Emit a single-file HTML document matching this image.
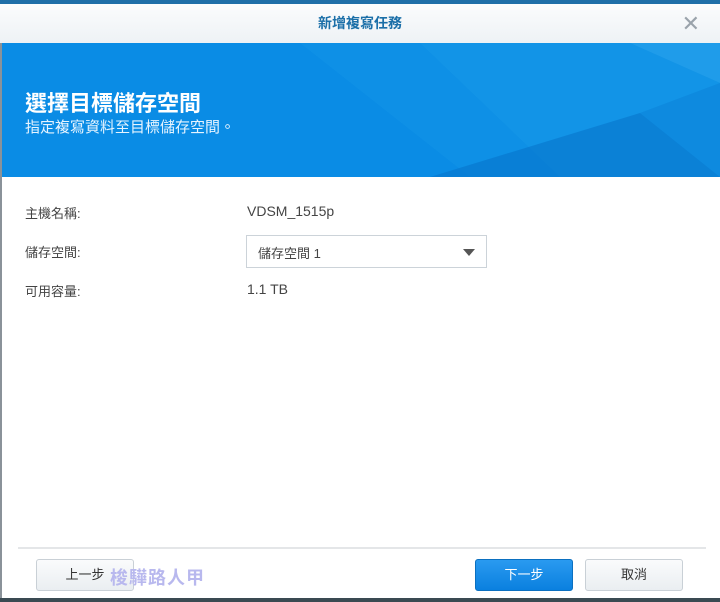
<!DOCTYPE html>
<html><head><meta charset="utf-8"><style>
*{margin:0;padding:0;box-sizing:border-box}
body{width:720px;height:602px;overflow:hidden;background:#fff;font-family:"Liberation Sans","Noto Sans CJK TC",sans-serif;position:relative}
.top{position:absolute;left:0;top:0;width:720px;height:4px;background:#1f6fa8}
.title{position:absolute;left:0;top:4px;width:720px;height:39px;background:linear-gradient(#fbfcfd,#eef2f5);text-align:center;line-height:39px;font-size:14px;color:#1b6fa8;font-weight:bold}
.x{position:absolute;right:20px;top:4px;line-height:39px;font-size:22px;color:#9aa3ab;font-family:"Liberation Sans",sans-serif}
.banner{position:absolute;left:0;top:43px;width:720px;height:134px;background:#0a8ce5;overflow:hidden}
.banner h1{position:absolute;left:25px;top:43px;font-size:22px;color:#fff;font-weight:bold}
.banner p{position:absolute;left:25px;top:73px;font-size:15px;color:#e6f4ff}
.lbl{position:absolute;left:25px;font-size:13px;color:#444}
.val{position:absolute;left:247px;font-size:14px;color:#444}
.sel{position:absolute;left:246px;top:235px;width:241px;height:33px;border:1px solid #ccd3d9;background:#fff}
.sel span{position:absolute;left:11px;top:7px;font-size:13px;color:#444}
.tri{position:absolute;right:11px;top:13px;width:0;height:0;border-left:6px solid transparent;border-right:6px solid transparent;border-top:7px solid #555}
.sep{position:absolute;left:18px;top:547px;width:688px;height:2px;background:#e4e6e8}
.btn{position:absolute;top:559px;height:32px;border:1px solid #c9d0d6;border-radius:3px;background:linear-gradient(#fafbfc,#eaeef1);font-size:13px;color:#333;text-align:center;line-height:30px}
.blue{background:linear-gradient(#2a9af0,#0a80df);border-color:#0b70c0;color:#fff}
.bot{position:absolute;left:0;top:598px;width:720px;height:4px;background:#3a4a52}
.lb{position:absolute;left:0;top:43px;width:2px;height:555px;background:#8a9299}
</style></head><body>
<div class="top"></div>
<div class="title">新增複寫任務</div><div class="x">✕</div>
<div class="banner">
<svg width="720" height="134" style="position:absolute;left:0;top:0">
<polygon points="300,0 720,0 720,134 470,134" fill="#1192e6" opacity=".6"/>
<polygon points="420,0 630,0 720,40 720,134 560,134" fill="#1698e8" opacity=".5"/>
<polygon points="630,0 720,0 720,40" fill="#30a8ee" opacity=".5"/>
<polygon points="640,70 720,134 430,134" fill="#0675cc" opacity=".6"/>
<polygon points="640,70 720,40 720,134" fill="#0a80d8" opacity=".5"/>
</svg>
<h1>選擇目標儲存空間</h1><p>指定複寫資料至目標儲存空間。</p></div>
<div class="lbl" style="top:203px">主機名稱:</div><div class="val" style="top:203px">VDSM_1515p</div>
<div class="lbl" style="top:242px">儲存空間:</div>
<div class="sel"><span>儲存空間 1</span><div class="tri"></div></div>
<div class="lbl" style="top:281px">可用容量:</div><div class="val" style="top:281px">1.1 TB</div>
<div class="sep"></div>
<div class="btn" style="left:36px;width:98px">上一步</div>
<div style="position:absolute;left:110px;top:564px;font-size:18px;color:#b8b8ee;font-weight:bold;letter-spacing:1px">梭驊路人甲</div>
<div class="btn blue" style="left:475px;width:98px">下一步</div>
<div class="btn" style="left:585px;width:98px">取消</div>
<div class="lb"></div>
<div class="bot"></div>
</body></html>
